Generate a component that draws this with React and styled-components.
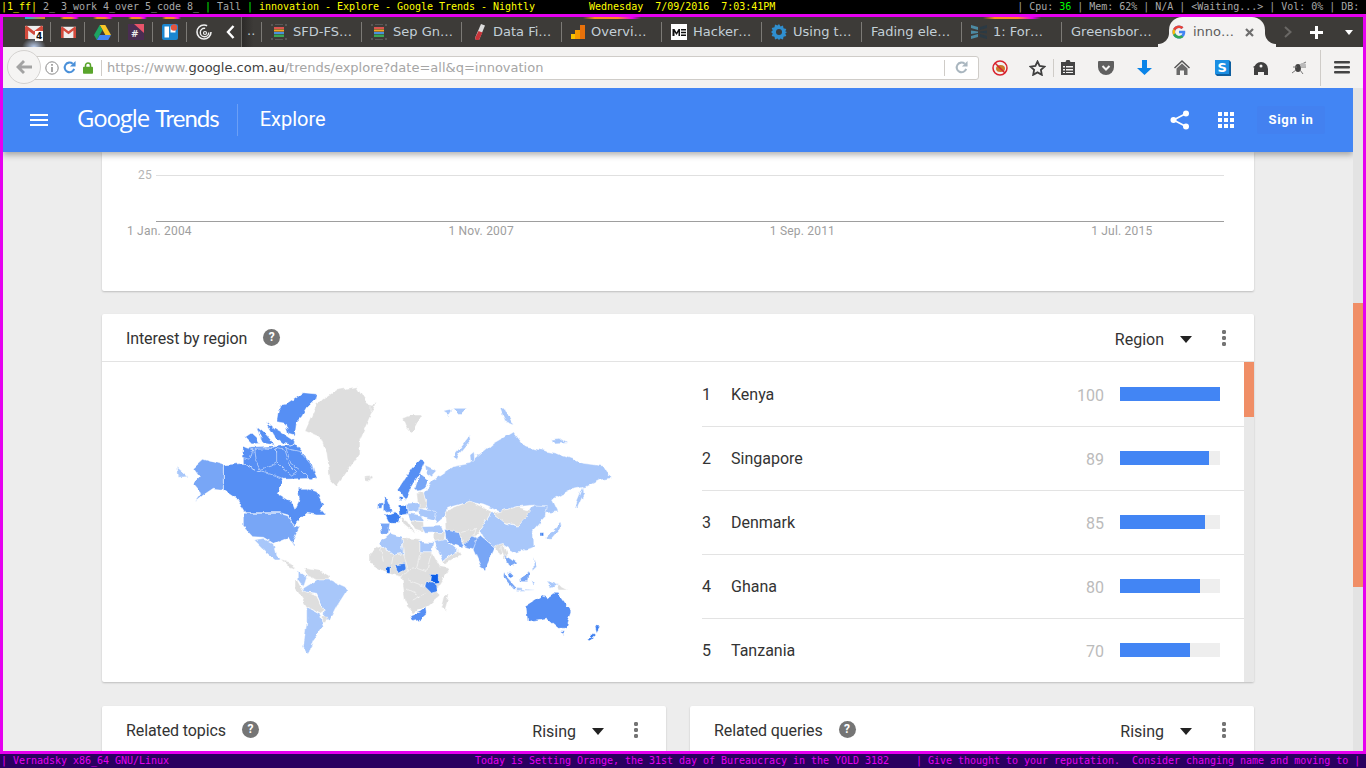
import React from "react";
import styled, { createGlobalStyle } from "styled-components";

const Global = createGlobalStyle`
  html, body { margin: 0; padding: 0; height: 768px; overflow: hidden; background: #000; }
  * { box-sizing: border-box; }
`;

const Screen = styled.div`
  width: 1366px; height: 768px; display: flex; flex-direction: column; overflow: hidden; background: #000;
`;
const StatusLine = styled.div`
  flex: 0 0 14px; height: 14px; padding-left: 1px; background: ${p => p.$bg};
  color: ${p => p.$fg}; font: 10px/13px "DejaVu Sans Mono", monospace; letter-spacing: -.02px; white-space: pre; overflow: hidden;
`;
const Hue = styled.span`color: ${p => p.$c};`;
const RightStatus = styled.span`margin-left: ${p => p.$m || 2}px;`;
const Frame = styled.div`
  flex: 1; min-height: 0; border: 3px solid #e600f0; display: flex; flex-direction: column; background: #ededed;
`;

/* tab strip */
const TabStrip = styled.div`
  position: relative; flex: 0 0 30px; height: 30px; background: #3d3b38; display: flex; align-items: center; padding-left: 14px;
`;
const Glow = styled.i`
  position: absolute; top: 0; height: 2px; left: ${p => p.$x}px; width: ${p => p.$w}px;
  background: ${p => p.$c || "linear-gradient(90deg, transparent, #f7941d 20%, #ff8a2a 60%, #e600f0 85%, transparent)"};
`;
const Pinned = styled.div`
  flex: 0 0 34px; height: 30px; display: flex; align-items: center; justify-content: center; position: relative;
  ${p => p.$glow && "background: radial-gradient(ellipse 12px 9px at 50% 100%, rgba(200,220,255,.9), transparent);"}
  ${p => !p.$plain && `&::after { content: ""; position: absolute; right: 0; top: 5px; height: 20px; width: 1px; background: #7c7a76; }`}
`;
const Badge = styled.b`
  position: absolute; left: 18px; top: 14px; font: 700 9px/10px "DejaVu Sans", sans-serif; color: #111; background: #fff;
  padding: 0 1px; text-shadow: 0 0 2px #fff;
`;
const ScrollBack = styled.div`
  flex: 0 0 20px; height: 30px; display: flex; align-items: center; padding-left: 5px; color: #fff;
`;
const Ellipsis = styled.div`
  flex: 0 0 20px; height: 30px; border-left: 1px solid #6e6c68; padding: 5px 0 0 5px;
  background: linear-gradient(90deg, #2c2a28, #3d3b38 60%);
  font: 13px/18px "DejaVu Sans", sans-serif; color: #bfcad2;
`;
const Tab = styled.div`
  flex: 0 0 100px; height: 30px; display: flex; align-items: center; gap: 6px; padding-left: 10px; position: relative;
  font: 13px/18px "DejaVu Sans", sans-serif; color: #c3cfd7; white-space: nowrap;
  & > svg { flex: none; }
  &::before { content: ""; position: absolute; left: 0; top: 5px; height: 20px; width: 1px; background: #7c7a76; }
`;
const ActiveTab = styled.div`
  flex: 0 0 96px; height: 30px; margin: 0 0 0 8px; display: flex; align-items: center; gap: 7px; padding-left: 3px;
  position: relative; background: #f3f2f1; border-radius: 13px 13px 0 0; z-index: 1;
  font: 13px/18px "DejaVu Sans", sans-serif; color: #5c5c5c; white-space: nowrap;
  &::before, &::after { content: ""; position: absolute; bottom: 0; width: 11px; height: 14px; }
  &::before { left: -11px; background: radial-gradient(circle at 0 0, transparent 10.5px, #f3f2f1 11.5px); }
  &::after { right: -11px; background: radial-gradient(circle at 100% 0, transparent 10.5px, #f3f2f1 11.5px); }
`;
const CloseX = styled.span`margin-left: 4px; display: flex;`;
const StripEnd = styled.div`
  flex: 1; height: 30px; display: flex; align-items: center; padding-left: 19px;
`;
const PlusIcon = styled.svg`margin-left: 18px;`;
const MoreIcon = styled.svg`margin-left: 22px;`;

/* nav bar */
const NavBar = styled.div`
  position: relative; flex: 0 0 41px; height: 41px; background: #f3f2f1; display: flex; align-items: center; padding-left: 30px;
`;
const BackCircle = styled.div`
  position: absolute; left: 4px; top: 3px; width: 34px; height: 34px; border-radius: 50%; background: #f5f4f3;
  border: 1px solid #d4d2d0; display: flex; align-items: center; justify-content: center; z-index: 1;
`;
const UrlBar = styled.div`
  width: 946px; height: 24px; background: #fff; border: 1px solid #cfccc8; border-radius: 0 3px 3px 0; display: flex; align-items: center;
  padding-left: 11px;
`;
const UrlIcons = styled.div`display: flex; align-items: center; gap: 4px; width: 56px; flex: none;`;
const LockWrap = styled.span`display: flex; margin-left: 3px;`;
const VSep = styled.i`flex: none; width: 1px; height: ${p => p.$h || 16}px; background: #cfccc8;`;
const UrlText = styled.div`
  flex: 1; margin-left: 5px; font: 13px/18px "DejaVu Sans", sans-serif; color: #a5a5a5; white-space: nowrap; overflow: hidden;
`;
const Host = styled.span`color: #3f3f3f;`;
const UrlEnd = styled.div`flex: 0 0 33px; height: 22px; display: flex; align-items: center; justify-content: center;`;
const ToolRow = styled.div`flex: 1; display: flex; align-items: center; height: 41px;`;
const Tool = styled.div`
  flex: 0 0 ${p => p.$w}px; height: 41px; display: flex; align-items: center; justify-content: center;
`;

/* page */
const PageRow = styled.div`flex: 1; min-height: 0; display: flex;`;
const PageCol = styled.div`flex: 1; min-width: 0; display: flex; flex-direction: column; overflow: hidden;`;
const Track = styled.div`flex: 0 0 10px; background: #e3e3e3; padding-top: 215px;`;
const Thumb = styled.div`height: ${p => p.$h}px; background: #f08e66;`;
const Header = styled.header`
  position: relative; z-index: 2; flex: 0 0 64px; height: 64px; background: #4285f4; color: #fff;
  box-shadow: 0 3px 6px rgba(0,0,0,.3); display: flex; align-items: center; padding-left: 27px;
`;
const Menu = styled.div`flex: none; width: 18px; height: 12px; border-top: 2px solid #fff; border-bottom: 2px solid #fff; position: relative; margin-top: -1px;
  &::after { content: ""; position: absolute; left: 0; right: 0; top: 3px; height: 2px; background: #fff; }
`;
const Logo = styled.div`
  margin-left: 29px; font: 400 24px/30px "Open Sans", sans-serif; letter-spacing: -1.15px; white-space: nowrap; display: flex; gap: 6px; margin-top: -4px;
`;
const LogoLight = styled.span`font-family: Lato, sans-serif; font-weight: 400; letter-spacing: -1px; font-size: 24px;`;
const HeadSep = styled.i`width: 1px; height: 32px; margin-left: 18px; background: rgba(255,255,255,.22);`;
const Section = styled.div`margin-left: 22px; font: 400 20px/24px Roboto, sans-serif; margin-top: -2px;`;
const HeadRight = styled.div`margin-left: auto; display: flex; align-items: center; padding-right: 28px;`;
const AppsGap = styled.span`width: 28px;`;
const SignIn = styled.div`
  margin-left: 23px; width: 68px; height: 28px; background: #4381f0; border-radius: 2px; text-align: center;
  font: 700 13px/28px Roboto, sans-serif; letter-spacing: .7px;
`;
const Content = styled.main`
  flex: 1; min-height: 0; padding: 0 99px; display: flex; flex-direction: column; gap: 23px; overflow: hidden;
`;
const Card = styled.section`
  flex: none; background: #fff; border-radius: 2px; box-shadow: 0 1px 2px rgba(0,0,0,.2); height: ${p => p.$h}px; overflow: hidden;
`;
const ChartCard = styled(Card)`padding: 23px 30px 0 25px; border-radius: 0 0 2px 2px;`;
const GridLine = styled.div`display: flex; align-items: center; height: 1px; margin-left: 11px;`;
const Tick = styled.span`flex: 0 0 18px; margin-top: -2px; font: 12px/14px Roboto, sans-serif; color: #b5b5b5; letter-spacing: .2px;`;
const Rule = styled.i`flex: 1; height: 1px; background: #e0e0e0;`;
const Axis = styled.div`height: 1px; background: #9e9e9e; margin: 45px 0 0 29px;`;
const DateRow = styled.div`display: flex; margin-top: 2px;`;
const DateLabel = styled.span`flex: 0 0 321.4px; font: 12px/14px Roboto, sans-serif; color: #9e9e9e; letter-spacing: .2px;`;

const CardHead = styled.div`
  height: 48px; display: flex; align-items: center; padding: 0 24px; ${p => p.$line && "border-bottom: 1px solid #e3e3e3;"}
`;
const Title = styled.div`font: 400 16px/20px Roboto, sans-serif; color: #333; margin-top: 2px; letter-spacing: -.1px;`;
const Help = styled.span`
  margin-left: 16px; width: 17px; height: 17px; border-radius: 50%; background: #757575; color: #fff; margin-top: -1px;
  font: 700 12px/17px Roboto, sans-serif; text-align: center;
`;
const Picker = styled.div`margin-left: auto; font: 400 16px/20px Roboto, sans-serif; color: #333; margin-top: 4px;`;
const Caret = styled.i`margin-left: 16px; width: 0; height: 0; border-left: 6px solid transparent; border-right: 6px solid transparent; border-top: 7px solid #222; margin-top: 3px;`;
const Kebab = styled.div`
  margin-left: 30px; margin-right: 4px; width: 4px; height: 16px;
  background: radial-gradient(circle at 2px 2px, #757575 2px, transparent 2.3px) 0 0 / 4px 6px repeat-y;
`;
const RegionBody = styled.div`display: flex; height: 320px;`;
const MapPane = styled.div`flex: 0 0 600px; padding: 18px 0 0 58px;`;
const MapSvg = styled.svg`display: block; width: 460px; height: 285px; overflow: visible;`;
const List = styled.div`flex: 1; min-width: 0; overflow: hidden; padding-top: 1px;`;
const Row = styled.div`
  height: 64px; display: flex; align-items: center; font: 400 16px/20px Roboto, sans-serif; color: #333;
  border-bottom: 1px solid ${p => p.$last ? "transparent" : "#e3e3e3"};
`;
const Rank = styled.span`flex: 0 0 29px;`;
const Name = styled.span`flex: 1;`;
const Val = styled.span`flex: 0 0 40px; text-align: right; color: #bbb; margin-top: 2px;`;
const Bar = styled.div`flex: 0 0 100px; height: 14px; margin: -2px 24px 0 16px; background: #eee;`;
const Fill = styled.div`height: 100%; background: #4285f4;`;
const InnerTrack = styled.div`flex: 0 0 10px; background: #e8e8e8;`;
const Pair = styled.div`flex: none; display: grid; grid-template-columns: 564px 564px; gap: 24px; margin-top: 1px;`;

const Gmail = ({ s = 18 }) => (
  <svg width={s} height={s * 0.8} viewBox="0 0 20 16"><path d="M0 1h20v15H0z" fill="#eee" /><path d="M0 2v14h3.500V6L10 11l6.500-5v10H20V2l-1.500-1.500L10 7 1.500.5z" fill="#d24a3c" /></svg>
);
const Drive = () => (
  <svg width="17" height="15" viewBox="0 0 17 15"><path d="M5.700 0h5.600L17 10h-5.600z" fill="#f7c626" /><path d="M5.700 0 0 10l2.800 5 5.700-10z" fill="#1da462" /><path d="M2.800 15h11.400L17 10H5.700z" fill="#4285f4" /></svg>
);
const Slack = () => (
  <svg width="16" height="16" viewBox="0 0 16 16"><path d="M0 0h16v16H0z" fill="#4a2d52" /><path d="M6 0h10v9z" fill="#e8546a" /><text x="3" y="13" fontSize="9" fontWeight="700" fontFamily="DejaVu Sans" fill="#eee">#</text></svg>
);
const Trello = () => (
  <svg width="16" height="16" viewBox="0 0 16 16"><rect width="16" height="16" rx="2" fill="#1a86d0" /><rect x="2.500" y="2.500" width="4.500" height="11" fill="#fff" /><rect x="8.500" y="2.500" width="5" height="6" fill="#fff" /><circle cx="12" cy="3.500" r="3.200" fill="#e4553d" /></svg>
);
const Spiral = () => (
  <svg width="16" height="16" viewBox="0 0 16 16" fill="none" stroke="#eee"><circle cx="8" cy="8" r="7" strokeWidth="1.600" strokeDasharray="36 8" /><circle cx="8.500" cy="8.500" r="4.200" strokeWidth="1.400" strokeDasharray="20 6" /><circle cx="9" cy="9" r="1.500" strokeWidth="1.200" /></svg>
);
const Stack = () => (
  <svg width="16" height="16" viewBox="0 0 16 16"><path d="M1 0v2M15 0v2M1 14v2M15 14v2M4 0h8M4 16h8" stroke="#777" /><path d="M3 3h10v2H3z" fill="#d9534f" /><path d="M3 5.500h10v2H3z" fill="#f5a623" /><path d="M3 8h10v2H3z" fill="#4a90d9" /><path d="M3 10.500h10v2.500H3z" fill="#3aa655" /></svg>
);
const Tube = () => (
  <svg width="16" height="18" viewBox="0 0 16 18"><path d="M10 1l4 1.500L8 17H5l-1-2z" fill="#ddd" /><path d="M7.500 8l4 1.500L8 17H5l-1-2z" fill="#c8353a" /></svg>
);
const Analytics = () => (
  <svg width="14" height="14" viewBox="0 0 14 14"><path d="M0 9h5v5H0z" fill="#f7c200" /><path d="M4 5h5v9H4z" fill="#f59a00" /><path d="M9 0h5v14H9z" fill="#e8710a" /></svg>
);
const HackerM = () => (
  <svg width="16" height="16" viewBox="0 0 16 16"><path d="M0 0h16v16H0z" fill="#fff" /><path d="M1.500 12V5h2l2 3.500L7.500 5H9v7H7.500V8L5.500 11l-2-3v4zM10 5h5v1.500h-5zM10 7.800h5v1.400h-5zM10 10.500h5V12h-5z" fill="#111" /></svg>
);
const Gear = () => (
  <svg width="16" height="16" viewBox="0 0 16 16"><path d="M8 0l1.500 2.500L12 1.500l.5 2.800 2.800.6-1 2.600L16 8l-1.700 1.500 1 2.600-2.800.6-.5 2.800-2.500-1L8 16l-1.500-1.500-2.500 1-.5-2.800-2.800-.6 1-2.600L0 8l1.700-1.500-1-2.600 2.800-.6.500-2.800 2.500 1z" fill="#2f8fd0" /><circle cx="8" cy="8" r="3" fill="#3d3b38" /></svg>
);
const Layers = () => (
  <svg width="16" height="16" viewBox="0 0 16 16"><path d="M0 1l7 2v3L0 4zM0 6.500l7 1v1.500l-7 1zM0 12l7-2v3l-7 2z" fill="#4d8ba3" /><path d="M9 3l7-2v3L9 6zM9 7.500l7-1v3l-7-1zM9 10l7 2v3l-7-2z" fill="#2b3a44" /></svg>
);
const GoogleG = () => (
  <svg width="14" height="14" viewBox="0 0 48 48"><path d="M24 20v8.500h11.800C34.700 34 30 37.500 24 37.500c-7.500 0-13.500-6-13.500-13.500S16.500 10.500 24 10.500c3.400 0 6.400 1.200 8.800 3.300l6.300-6.300C35.100 3.900 29.900 1.500 24 1.500 11.600 1.500 1.500 11.600 1.500 24S11.600 46.500 24 46.500c11.600 0 21.500-8.400 21.500-22.500 0-1.400-.2-2.800-.4-4z" fill="#4285f4" /><path d="M4 13.500l7.400 5.400C13.400 14 18.300 10.500 24 10.500c3.400 0 6.400 1.200 8.800 3.300l6.300-6.300C35.100 3.900 29.900 1.500 24 1.500 15.400 1.500 8 6.400 4 13.500z" fill="#ea4335" /><path d="M4 13.500C2.400 16.600 1.500 20.200 1.500 24s.9 7.400 2.500 10.500l7.500-5.800c-.6-1.500-1-3-1-4.700s.4-3.300 1-4.700z" fill="#fbbc05" /><path d="M24 46.500c5.800 0 11-1.900 15-5.500l-7-5.700c-2 1.400-4.700 2.200-8 2.200-5.800 0-10.700-3.900-12.500-9L4 34.500C8 41.600 15.400 46.500 24 46.500z" fill="#34a853" /></svg>
);

const Back = () => <svg width="18" height="16" viewBox="0 0 18 16"><path d="M8 1L1 8l7 7 2-2-3.500-3.500H17v-3H6.500L10 3z" fill="#a3a3a3" /></svg>;
const Info = () => <svg width="14" height="14" viewBox="0 0 14 14" fill="none"><circle cx="7" cy="7" r="6.200" stroke="#888" /><path d="M7 3v1.800M7 6v5" stroke="#888" strokeWidth="1.500" /></svg>;
const Reload = ({ c = "#4a90d9", s = 14 }) => <svg width={s} height={s} viewBox="0 0 14 14" fill="none"><path d="M12 8.500A5.200 5.200 0 1 1 10.500 3" stroke={c} strokeWidth="2.200" /><path d="M13.500 0v6h-6z" fill={c} /></svg>;
const Lock = () => <svg width="10" height="12" viewBox="0 0 12 14"><path d="M3 6V4a3 3 0 0 1 6 0v2" fill="none" stroke="#5aa52c" strokeWidth="1.800" /><rect y="5.500" width="12" height="8.500" rx="1" fill="#5aa52c" /></svg>;
const NoBug = () => <svg width="16" height="16" viewBox="0 0 16 16" fill="none"><ellipse cx="8.500" cy="8.500" rx="4.500" ry="3.500" fill="#c9792b" /><circle cx="8" cy="8" r="7" stroke="#d9232e" strokeWidth="1.500" /><path d="M3 3l10 10" stroke="#d9232e" strokeWidth="1.500" /></svg>;
const Star = () => <svg width="17" height="16" viewBox="0 0 17 16"><path d="M8.500 1.500l2.100 4.500 4.900.6-3.600 3.300.9 4.900-4.300-2.400-4.300 2.400.9-4.900L1.500 6.600l4.900-.6z" fill="none" stroke="#3f3f3f" strokeWidth="1.800" /></svg>;
const Clip = () => <svg width="14" height="15" viewBox="0 0 14 15"><path d="M0 2h4.500l1-2h3l1 2H14v13H0z" fill="#444" /><path d="M2 6h2v1.500H2zM5 6h7v1.500H5zM2 9h2v1.500H2zM5 9h7v1.500H5zM2 12h2v1H2zM5 12h7v1H5z" fill="#f3f2f1" /></svg>;
const Pocket = () => <svg width="16" height="14" viewBox="0 0 16 14"><path d="M1 0h14a1 1 0 0 1 1 1v5a8 8 0 0 1-16 0V1a1 1 0 0 1 1-1z" fill="#5f5f5f" /><path d="M4.500 5L8 8.500 11.500 5" fill="none" stroke="#f3f2f1" strokeWidth="2" /></svg>;
const Down = () => <svg width="15" height="15" viewBox="0 0 15 15"><path d="M5 0h5v8h5l-7.500 7L0 8h5z" fill="#0a84e8" /></svg>;
const Home = () => <svg width="16" height="15" viewBox="0 0 16 15"><path d="M8 0L0 7.500l1 1L8 2l7 6.500 1-1z" fill="#555" /><path d="M2.500 8.500L8 3.500l5.500 5V15H10v-4.500H6V15H2.500z" fill="#6a6a6a" /></svg>;
const SBox = () => <svg width="16" height="16" viewBox="0 0 16 16"><path d="M0 0h14l2 2v14H2l-2-2z" fill="#0f5f9f" /><rect width="14" height="14" fill="#1a8fe3" /><text x="2.500" y="12" fontSize="13" fontWeight="700" fontFamily="DejaVu Sans" fill="#fff">S</text></svg>;
const Elephant = () => <svg width="16" height="14" viewBox="0 0 16 14"><path d="M1 14V8a7 7 0 0 1 14 0v6h-4v-3H5v3zM0 6l3-2v4z" fill="#3f3f3f" /><circle cx="8" cy="5" r="1.500" fill="#f3f2f1" /></svg>;
const Fly = () => <svg width="16" height="14" viewBox="0 0 16 14"><ellipse cx="7" cy="7" rx="3" ry="4" fill="#444" /><path d="M9 4l6-3M9 6l6 0M5 9l-4 3M9 9l3 4M2 6h4" stroke="#777" /><ellipse cx="12" cy="4" rx="3" ry="2" fill="#bbb" /></svg>;
const Burger = () => <svg width="16" height="13" viewBox="0 0 16 13" fill="#444"><rect width="16" height="2.500" rx="1" /><rect y="5" width="16" height="2.500" rx="1" /><rect y="10" width="16" height="2.500" rx="1" /></svg>;
const Share = () => <svg width="20" height="20" viewBox="0 0 20 20" fill="#fff"><circle cx="16" cy="3.500" r="3" /><circle cx="3.500" cy="10" r="3" /><circle cx="16" cy="16.500" r="3" /><path d="M16 3.500L3.500 10 16 16.500" fill="none" stroke="#fff" strokeWidth="1.700" /></svg>;
const Apps = () => <svg width="16" height="16" viewBox="0 0 16 16" fill="#fff">{[0, 6, 12].flatMap(x => [0, 6, 12].map(y => <rect key={x + "-" + y} x={x} y={y} width="4" height="4" />))}</svg>;

const C = { a: "#568ff4", b: "#78a6f6", l: "#a8c7fa", g: "#dedede", d: "#3d7ff0", k: "#0d5fe8", n: "none" };

const west = [
  ["a", "M250,205 L345,200 L405,192 L455,250 L470,295 L370,298 L285,268 L250,250 Z"],
  ["a", "M365,75 L385,70 L400,60 L430,38 L470,42 L465,60 L440,85 L425,110 L410,125 L405,165 L385,160 L375,130 L350,125 L355,95 Z"],
  ["a", "M318,125 L345,148 L375,165 L405,185 L395,195 L370,190 L345,170 Z"],
  ["a", "M255,172 L275,158 L290,172 L300,190 L275,192 Z"],
  ["a", "M290,140 L320,165 L345,195 L310,190 L298,165 Z"],
  ["a", "M250,198 L278,210 L270,238 L246,232 Z"],
  ["a", "M282,208 L345,205 L362,240 L335,258 L300,268 L285,240 Z"],
  ["a", "M350,205 L372,210 L385,250 L410,275 L395,285 L370,265 L350,245 Z"],
  ["a", "M378,205 L420,215 L450,250 L470,290 L450,300 L420,270 L392,250 Z"],
  ["a", "M190,255 L250,250 L285,268 L330,280 L370,295 L352,340 L395,365 L405,388 L418,360 L415,325 L440,325 L470,335 L490,375 L480,385 L498,405 L470,405 L440,400 L400,437 L385,405 L360,398 L258,398 L235,360 L190,330 Z"],
  ["b", "M100,265 L130,238 L190,255 L190,328 L160,325 L130,345 L105,365 L125,340 L100,310 L118,290 Z"],
  ["l", "M52,262 L85,290 L55,292 Z"],
  ["b", "M250,400 L358,400 L385,408 L400,437 L420,440 L400,480 L402,502 L385,472 L340,490 L310,472 L278,470 L250,440 Z"],
  ["l", "M280,480 L310,475 L340,492 L348,525 L365,540 L345,540 L310,510 Z"],
  ["g", "M435,150 L470,70 L530,30 L590,20 L620,70 L645,75 L600,180 L600,220 L530,320 L510,300 L500,220 L480,170 Z"],
  ["g", "M610,292 L640,288 L630,305 L615,303 Z"],
  ["g", "M365,540 L395,550 L410,570 L385,560 Z"],
  ["l", "M415,572 L440,590 L430,620 L415,600 Z"],
  ["g", "M432,565 L480,572 L510,590 L510,600 L470,600 L440,590 Z"],
  ["l", "M430,625 L470,600 L510,600 L565,625 L530,680 L510,720 L490,725 L492,690 L470,640 L430,635 Z"],
  ["g", "M405,600 L415,605 L430,632 L470,645 L492,692 L480,700 L440,680 L405,622 Z"],
  ["l", "M440,680 L480,702 L490,740 L460,780 L445,825 L430,800 L440,730 Z"],
  ["g", "M485,710 L505,712 L495,728 L485,725 Z"]
];
const east = [
  ["g", "M0,75 L16,70 L10,90 L0,95 Z"], ["g", "M0,290 L8,286 L8,298 L0,300 Z"],
  ["g", "M100,115 L125,105 L155,105 L125,160 L112,145 Z"],
  ["l", "M220,95 L245,90 L235,105 Z"], ["l", "M250,85 L290,85 L270,105 Z"],
  ["l", "M390,85 L405,85 L430,135 L405,125 Z"], ["l", "M548,178 L570,175 L592,190 L555,192 Z"],
  ["l", "M248,230 L300,165 L304,178 L265,225 L258,242 Z"],
  ["l", "M300,225 L312,215 L316,265 L335,280 L305,275 Z"], ["l", "M320,225 L355,230 L345,255 L325,250 Z"],
  ["l", "M160,340 L190,300 L250,260 L300,250 L370,190 L430,155 L465,200 L560,220 L640,250 L700,258 L722,295 L690,300 L650,320 L600,330 L545,360 L562,395 L530,400 L490,375 L440,380 L390,395 L340,375 L300,365 L230,385 L225,410 L200,430 L170,380 Z"],
  ["l", "M615,382 L640,320 L642,340 L622,385 Z"],
  ["g", "M226,393 L300,363 L365,395 L335,445 L310,475 L295,490 L230,450 Z"],
  ["l", "M330,452 L365,397 L410,430 L445,438 L485,378 L532,380 L525,410 L490,450 L492,500 L440,520 L400,495 L375,505 L340,470 Z"],
  ["g", "M370,400 L440,380 L485,392 L445,438 L400,425 Z"],
  ["b", "M310,480 L330,465 L375,503 L345,570 L332,560 L310,510 Z"],
  ["g", "M375,497 L400,490 L405,520 L390,525 Z"],
  ["a", "M82,330 L125,265 L150,240 L165,245 L150,280 L125,320 L105,360 L95,340 Z"],
  ["b", "M135,325 L150,280 L175,300 L165,325 L145,335 Z"],
  ["l", "M165,255 L202,272 L185,290 L170,280 Z"],
  ["g", "M140,340 L160,335 L172,385 L145,388 Z"],
  ["a", "M40,365 L45,345 L62,385 L65,392 L40,395 Z"], ["a", "M27,370 L38,368 L35,385 L25,385 Z"],
  ["d", "M88,350 L96,350 L96,362 L88,362 Z"],
  ["d", "M45,405 L75,395 L90,408 L85,430 L60,430 L55,425 Z"],
  ["d", "M85,375 L112,373 L115,402 L88,406 Z"],
  ["b", "M30,430 L60,430 L55,460 L35,460 Z"],
  ["l", "M112,370 L147,368 L147,395 L115,397 Z"],
  ["l", "M147,385 L200,395 L195,420 L150,408 Z"],
  ["l", "M113,400 L150,405 L160,425 L122,422 Z"], ["g", "M90,410 L112,425 L135,460 L100,430 Z"],
  ["g", "M122,423 L160,425 L162,455 L135,447 Z"],
  ["l", "M155,440 L215,438 L222,458 L165,460 Z"],
  ["g", "M190,458 L226,458 L222,485 L190,485 Z"],
  ["b", "M224,448 L268,458 L282,505 L250,495 L228,480 Z"],
  ["g", "M268,458 L318,448 L305,490 L280,492 Z"],
  ["b", "M280,497 L305,468 L322,475 L310,507 Z"],
  ["l", "M190,485 L225,478 L262,510 L220,542 Z"], ["g", "M215,545 L265,510 L272,525 L225,550 Z"],
  ["g", "M0,520 L30,495 L70,525 L100,520 L95,475 L150,480 L150,515 L185,515 L210,560 L240,565 L205,620 L205,650 L170,680 L125,700 L105,660 L95,590 L50,580 L0,550 Z"],
  ["n", "M30,495 L40,545 M70,525 L65,555 M100,520 L115,570 L95,590 M150,515 L140,565 L115,570 M185,515 L170,575 L140,565 M115,600 L165,620 M125,660 L170,640 M110,630 L150,650"],
  ["l", "M25,490 L60,460 L95,470 L100,520 L70,525 Z"], ["l", "M150,485 L190,488 L185,515 L150,515 Z"],
  ["d", "M75,555 L105,550 L108,565 L85,580 Z"], ["k", "M50,560 L60,560 L60,580 L50,580 Z"],
  ["k", "M185,583 L205,585 L205,610 L190,612 L182,605 Z"], ["d", "M170,605 L200,615 L203,635 L185,640 L165,620 Z"],
  ["a", "M122,705 L150,695 L170,680 L172,700 L150,720 L128,725 Z"],
  ["g", "M225,645 L238,645 L225,690 L215,685 Z"],
  ["a", "M465,680 L520,645 L535,650 L550,640 L565,640 L605,695 L590,745 L565,745 L530,715 L470,725 Z"],
  ["a", "M572,755 L584,755 L578,768 Z"], ["d", "M652,780 L672,760 L678,765 L660,782 Z"], ["d", "M675,740 L690,742 L680,760 Z"],
  ["l", "M525,475 L560,440 L570,425 L575,440 L545,475 Z"], ["d", "M510,455 L518,455 L518,468 L510,468 Z"],
  ["g", "M392,500 L405,500 L415,530 L402,535 Z"], ["b", "M405,525 L440,550 L420,560 Z"],
  ["b", "M402,580 L440,625 L428,625 L400,592 Z"], ["a", "M415,575 L430,590 L420,595 Z"],
  ["b", "M448,592 L480,575 L476,605 L450,605 Z"], ["l", "M440,625 L495,630 L440,632 Z"],
  ["l", "M490,535 L500,560 L490,570 Z"], ["l", "M485,600 L495,605 L490,615 Z"], ["l", "M530,605 L560,615 L545,625 Z"],
  ["g", "M560,612 L595,630 L565,630 Z"]
];

const WorldMap = () => (
  <MapSvg viewBox="0 0 460 285">
    <defs>
      <filter id="coast" x="-5%" y="-5%" width="110%" height="110%">
        <feTurbulence type="fractalNoise" baseFrequency=".14" numOctaves="2" seed="4" result="n" />
        <feDisplacementMap in="SourceGraphic" in2="n" scale="5" xChannelSelector="R" yChannelSelector="G" />
        <feGaussianBlur stdDeviation=".25" />
      </filter>
    </defs>
    <g filter="url(#coast)">
      <g transform="scale(.3333)" stroke="#fff" strokeWidth="1.500" strokeLinejoin="round">
        {west.map(([c, d], i) => <path key={i} d={d} fill={C[c]} />)}
      </g>
      <g transform="translate(210,0) scale(.3333)" stroke="#fff" strokeWidth="1.500" strokeLinejoin="round">
        {east.map(([c, d], i) => <path key={i} d={d} fill={C[c]} />)}
      </g>
    </g>
  </MapSvg>
);

const regions = [["Kenya", 100], ["Singapore", 89], ["Denmark", 85], ["Ghana", 80], ["Tanzania", 70]];

const tabs = [
  [<Stack />, "SFD-FS…"], [<Stack />, "Sep Gn…"], [<Tube />, "Data Fi…"], [<Analytics />, "Overvi…"],
  [<HackerM />, "Hacker…"], [<Gear />, "Using t…"], [null, "Fading ele…"], [<Layers />, "1: For…"], [null, "Greensbor…"]
];
const glows = [[22, 20, "linear-gradient(90deg,#19b5e6,#e68a1e)"], [57, 19], [90, 20], [125, 19], [159, 19], [580, 58], [980, 58]];

const CardHeader = ({ title, pick, line }) => (
  <CardHead $line={line}>
    <Title>{title}</Title>
    <Help>?</Help>
    <Picker>{pick}</Picker>
    <Caret />
    <Kebab />
  </CardHead>
);

export default function App() {
  return (
    <Screen>
      <Global />
      <StatusLine $bg="#000" $fg="#a8a8a8">
        <Hue $c="#ffff00">|1_ff|</Hue>{" 2_ 3_work 4_over 5_code 8_ "}<Hue $c="#00ff00">|</Hue>{" Tall "}<Hue $c="#00ff00">|</Hue>{" "}
        <Hue $c="#ffff00">{"innovation - Explore - Google Trends - Nightly         Wednesday  7/09/2016  7:03:41PM"}</Hue>
        {" ".repeat(40)}
        <RightStatus>{"| Cpu: "}<Hue $c="#00ff00">36</Hue>{" | Mem: 62% | N/A | <Waiting...> | Vol: 0% | DB:"}</RightStatus>
      </StatusLine>
      <Frame>
        <TabStrip>
          {glows.map(([x, w, c]) => <Glow key={x} $x={x} $w={w} $c={c} />)}
          <Pinned $glow><Gmail /><Badge>4</Badge></Pinned>
          <Pinned><Gmail s={15} /></Pinned>
          <Pinned><Drive /></Pinned>
          <Pinned><Slack /></Pinned>
          <Pinned><Trello /></Pinned>
          <Pinned $plain><Spiral /></Pinned>
          <ScrollBack>
            <svg width="9" height="14" viewBox="0 0 9 14"><path d="M7.500 1L2 7l5.500 6" fill="none" stroke="#fff" strokeWidth="2.400" /></svg>
          </ScrollBack>
          <Ellipsis>..</Ellipsis>
          {tabs.map(([icon, label], i) => <Tab key={i}>{icon}{label}</Tab>)}
          <ActiveTab>
            <GoogleG />inno…
            <CloseX><svg width="9" height="9" viewBox="0 0 9 9"><path d="M1 1l7 7M8 1L1 8" stroke="#6e6e6e" strokeWidth="2.200" /></svg></CloseX>
          </ActiveTab>
          <StripEnd>
            <svg width="8" height="12" viewBox="0 0 8 12"><path d="M1 1l5.500 5L1 11" fill="none" stroke="#6a6865" strokeWidth="2" /></svg>
            <PlusIcon width="13" height="13" viewBox="0 0 13 13"><path d="M5 0h3v5h5v3H8v5H5V8H0V5h5z" fill="#fff" /></PlusIcon>
            <MoreIcon width="8" height="5" viewBox="0 0 8 5"><path d="M0 0h8L4 5z" fill="#fff" /></MoreIcon>
          </StripEnd>
        </TabStrip>
        <NavBar>
          <BackCircle><Back /></BackCircle>
          <UrlBar>
            <UrlIcons><Info /><Reload s={13} /><LockWrap><Lock /></LockWrap></UrlIcons>
            <VSep $h={16} />
            <UrlText>https://www.<Host>google.com.au</Host>/trends/explore?date=all&amp;q=innovation</UrlText>
            <VSep $h={16} />
            <UrlEnd><Reload c="#a9b6bf" s={13} /></UrlEnd>
          </UrlBar>
          <ToolRow>
            <Tool $w={42}><NoBug /></Tool>
            <Tool $w={32}><Star /></Tool>
            <VSep $h={18} />
            <Tool $w={28}><Clip /></Tool>
            <Tool $w={48}><Pocket /></Tool>
            <Tool $w={28}><Down /></Tool>
            <Tool $w={48}><Home /></Tool>
            <Tool $w={34}><SBox /></Tool>
            <Tool $w={42}><Elephant /></Tool>
            <Tool $w={34}><Fly /></Tool>
            <Tool $w={4} />
            <VSep $h={36} />
            <Tool $w={42}><Burger /></Tool>
          </ToolRow>
        </NavBar>
        <PageRow>
          <PageCol>
            <Header>
              <Menu />
              <Logo>Google<LogoLight>Trends</LogoLight></Logo>
              <HeadSep />
              <Section>Explore</Section>
              <HeadRight>
                <Share />
                <AppsGap />
                <Apps />
                <SignIn>Sign in</SignIn>
              </HeadRight>
            </Header>
            <Content>
              <ChartCard $h={139}>
                <GridLine><Tick>25</Tick><Rule /></GridLine>
                <Axis />
                <DateRow>
                  <DateLabel>1 Jan. 2004</DateLabel>
                  <DateLabel>1 Nov. 2007</DateLabel>
                  <DateLabel>1 Sep. 2011</DateLabel>
                  <DateLabel>1 Jul. 2015</DateLabel>
                </DateRow>
              </ChartCard>
              <Card $h={368}>
                <CardHeader title="Interest by region" pick="Region" line />
                <RegionBody>
                  <MapPane><WorldMap /></MapPane>
                  <List>
                    {regions.map(([n, v], i) => (
                      <Row key={n} $last={i === 4}>
                        <Rank>{i + 1}</Rank><Name>{n}</Name><Val>{v}</Val>
                        <Bar><Fill style={{ width: `${v}%` }} /></Bar>
                      </Row>
                    ))}
                  </List>
                  <InnerTrack><Thumb $h={55} /></InnerTrack>
                </RegionBody>
              </Card>
              <Pair>
                <Card $h={60}><CardHeader title="Related topics" pick="Rising" /></Card>
                <Card $h={60}><CardHeader title="Related queries" pick="Rising" /></Card>
              </Pair>
            </Content>
          </PageCol>
          <Track><Thumb $h={284} /></Track>
        </PageRow>
      </Frame>
      <StatusLine $bg="#2a0060" $fg="#e600f0">
        {"| Vernadsky x86_64 GNU/Linux"}{" ".repeat(51)}{"Today is Setting Orange, the 31st day of Bureaucracy in the YOLD 3182    "}
        <RightStatus $m={3}>{"| Give thought to your reputation.  Consider changing name and moving to |"}</RightStatus>
      </StatusLine>
    </Screen>
  );
}
